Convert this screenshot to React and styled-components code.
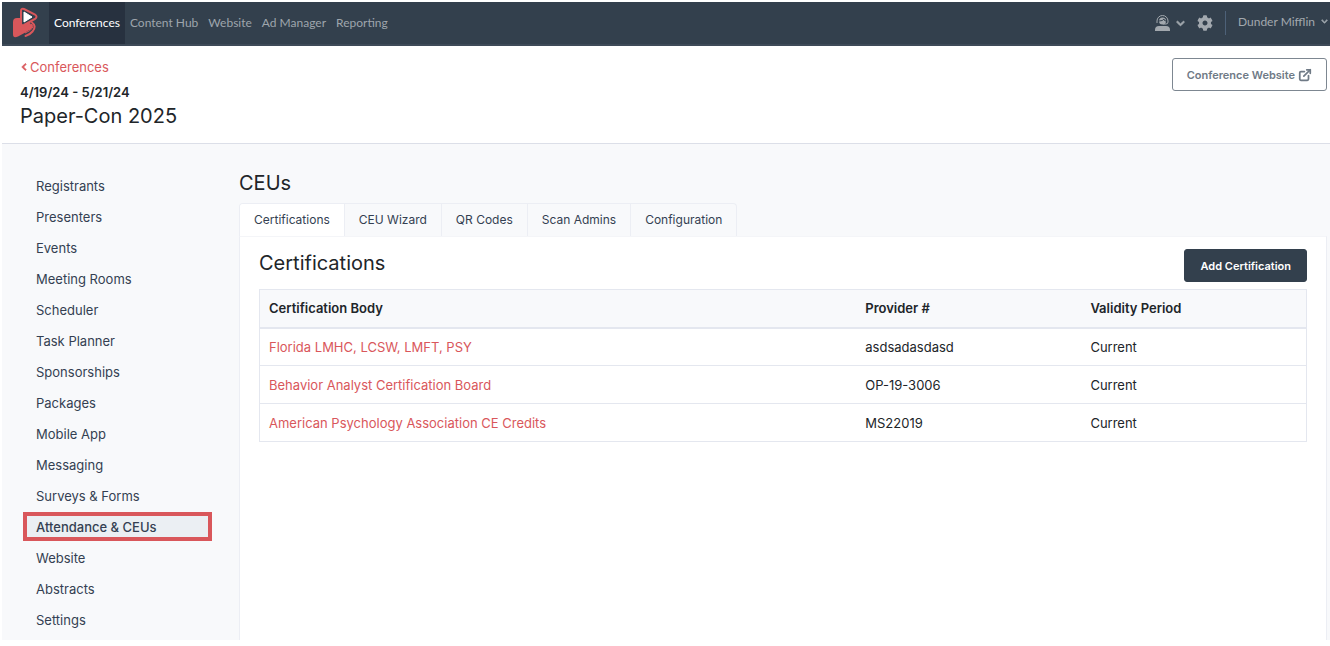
import React, { useState } from 'react';
import styled, { createGlobalStyle } from 'styled-components';
import { FaChevronLeft, FaChevronDown, FaCog } from 'react-icons/fa';
import { FiExternalLink } from 'react-icons/fi';

const GlobalStyle = createGlobalStyle`
  * {
    box-sizing: border-box;
  }

  body {
    margin: 0;
    background: #fff;
    color: #212529;
    font-family: Inter, "Open Sans", sans-serif;
    font-size: 13px;
    line-height: 20px;
  }

  h1, h2, h3, p, ul {
    margin: 0;
    padding: 0;
    font-weight: 400;
  }

  a {
    color: #d9575b;
    text-decoration: none;
  }

  button {
    font-family: inherit;
    cursor: pointer;
  }
`;

const Page = styled.div`
  display: flex;
  flex-direction: column;
  min-height: 100vh;
  padding: 2px 0 6px 2px;
`;

const TopBar = styled.header`
  display: flex;
  height: 44px;
  background: #33404d;
  border-bottom: 2px solid #3e4a58;
  font-family: Lato, sans-serif;
  font-size: 12px;
`;

const Brand = styled.a`
  display: flex;
  align-items: center;
  width: 47px;
  padding-left: 10px;
`;

const Nav = styled.nav`
  display: flex;
  flex: 1;
`;

const NavLink = styled.a`
  display: flex;
  align-items: center;
  padding: 0 5px;
  color: ${({ $active }) => ($active ? '#fff' : '#9ea5ac')};
  background: ${({ $active }) => ($active ? '#27313f' : 'transparent')};
`;

const Tools = styled.div`
  display: flex;
  align-items: center;
  gap: 12px;
`;

const ToolButton = styled.button`
  display: flex;
  align-items: center;
  gap: 6px;
  padding: 0;
  border: 0;
  background: none;
  color: #a2a8ae;
`;

const Account = styled(ToolButton)`
  height: 24px;
  padding: 0 2px 4px 12px;
  border-left: 1px solid #4d6178;
  font-size: 12px;
`;

const PageHeader = styled.div`
  display: flex;
  justify-content: space-between;
  align-items: flex-start;
  height: 98px;
  padding: 12px 3px 0 18px;
  border-bottom: 1px solid #dcdfe8;
`;

const BackLink = styled.a`
  display: flex;
  align-items: center;
  gap: 2px;
  line-height: 18px;
`;

const Dates = styled.p`
  padding-top: 6px;
  font-weight: 600;
`;

const Title = styled.h1`
  font-size: 20px;
  line-height: 28px;
`;

const OutlineLink = styled.a`
  display: flex;
  align-items: center;
  gap: 3px;
  height: 33px;
  padding: 0 14px;
  border: 1px solid #7d8791;
  border-radius: 3px;
  color: #6f7a86;
  font-size: 11px;
  font-weight: 600;
`;

const Body = styled.div`
  display: flex;
  flex: 1;
  background: #f8f9fb;
`;

const Sidebar = styled.nav`
  flex: none;
  width: 237px;
  padding: 27px 27px 4px 21px;
`;

const SideList = styled.ul`
  display: grid;
  gap: 2px;
  list-style: none;
`;

const SideLink = styled.a`
  display: flex;
  align-items: center;
  height: 29px;
  padding: 0 9px;
  border: 4px solid ${({ $active }) => ($active ? '#d9575b' : 'transparent')};
  background: ${({ $active }) => ($active ? '#ebeff3' : 'transparent')};
  color: #343f52;
  font-weight: ${({ $active }) => ($active ? 500 : 400)};
`;

const Main = styled.main`
  display: flex;
  flex: 1;
  flex-direction: column;
  padding: 25px 3px 0 0;
`;

const SectionTitle = styled.h2`
  font-size: 20px;
  line-height: 28px;
`;

const Tabs = styled.div`
  display: flex;
  align-self: flex-start;
  margin-top: 6px;
  border: 1px solid #eceef4;
  border-bottom: 0;
  border-radius: 4px 4px 0 0;
  overflow: hidden;
`;

const Tab = styled.button`
  height: 32px;
  padding: 0 14px 2px;
  border: 0;
  background: ${({ $active }) => ($active ? '#fff' : 'transparent')};
  color: #343f52;
  font-size: 12px;

  & + & {
    border-left: 1px solid #eceef4;
  }
`;

const Panel = styled.section`
  flex: 1;
  padding: 12px 19px;
  border: 1px solid #eceef4;
  border-top-color: #f4f5f8;
  border-bottom: 0;
  background: #fff;
`;

const PanelHeader = styled.div`
  display: flex;
  justify-content: space-between;
  margin-bottom: 7px;
`;

const PrimaryButton = styled.button`
  height: 33px;
  padding: 0 15px;
  border: 1px solid #33404d;
  border-radius: 3px;
  background: #33404d;
  color: #fff;
  font-size: 11px;
  font-weight: 600;
`;

const Table = styled.table`
  width: 100%;
  table-layout: fixed;
  border-collapse: collapse;
  border: 1px solid #e4e7ef;
`;

const HeadCell = styled.th`
  width: ${({ $width }) => $width};
  height: 38px;
  padding: 0 9px;
  border-bottom: 2px solid #e4e7ef;
  background: #f8f9fb;
  font-weight: 600;
  text-align: left;
`;

const Cell = styled.td`
  height: 38px;
  padding: 0 9px;
  border-bottom: 1px solid #e4e7ef;
`;

const Logo = () => (
  <svg width="26" height="32" viewBox="0 0 26 32" fill="none" aria-hidden="true">
    <path d="M8 11H5Q1 11 1 15V27Q1 32 6 29.500L18 23Q22 20 20 16L8 10Z" fill="#d9575b" />
    <path d="M18 16.500L21 15.500Q24 18 21 21.500Q19 24 15 25.500" stroke="#33404d" strokeWidth="2" />
    <path d="M18 17Q22.500 18 20 21.500Q18 24 13 26" stroke="#d9575b" strokeWidth="1" />
    <path d="M20 15.500Q25 19 20.500 24.500Q18 27.500 13.500 29" stroke="#d9575b" strokeWidth="2" strokeLinecap="round" />
    <path d="M9 4Q9 1 12 2L23 7.500Q26 9.500 23 12L12 18Q9 19 9 16Z" fill="#33404d" stroke="#d9575b" strokeWidth="2" />
    <path d="M12 5L20 10L12 15Z" fill="#fff" stroke="#fff" strokeLinejoin="round" />
  </svg>
);

const SupportIcon = () => (
  <svg width="15" height="17" viewBox="0 0 15 17" fill="none" stroke="currentColor" aria-hidden="true">
    <path d="M2 8V6A5.500 5.500 0 0 1 13 6V7Q13 9 11 9H8" />
    <circle cx="7.500" cy="6" r="3.500" fill="currentColor" stroke="none" />
    <path d="M4 6Q8 6 9 4Q9 6 11 6" stroke="#33404d" />
    <path d="M0 16V15Q0 11 4 11H11Q15 11 15 15V16Z" fill="currentColor" stroke="none" />
  </svg>
);

const navItems = ['Conferences', 'Content Hub', 'Website', 'Ad Manager', 'Reporting'];

const sideItems = [
  'Registrants',
  'Presenters',
  'Events',
  'Meeting Rooms',
  'Scheduler',
  'Task Planner',
  'Sponsorships',
  'Packages',
  'Mobile App',
  'Messaging',
  'Surveys & Forms',
  'Attendance & CEUs',
  'Website',
  'Abstracts',
  'Settings',
];

const tabs = ['Certifications', 'CEU Wizard', 'QR Codes', 'Scan Admins', 'Configuration'];

const certifications = [
  { body: 'Florida LMHC, LCSW, LMFT, PSY', provider: 'asdsadasdasd', validity: 'Current' },
  { body: 'Behavior Analyst Certification Board', provider: 'OP-19-3006', validity: 'Current' },
  { body: 'American Psychology Association CE Credits', provider: 'MS22019', validity: 'Current' },
];

function App() {
  const [tab, setTab] = useState('Certifications');

  return (
    <Page>
      <GlobalStyle />
      <TopBar>
        <Brand href="#" aria-label="Home"><Logo /></Brand>
        <Nav>
          {navItems.map((item) => (
            <NavLink key={item} href="#" $active={item === 'Conferences'}>{item}</NavLink>
          ))}
        </Nav>
        <Tools>
          <ToolButton aria-label="Support">
            <SupportIcon />
            <FaChevronDown size={9} stroke="currentColor" strokeWidth={50} />
          </ToolButton>
          <ToolButton aria-label="Settings"><FaCog size={16} /></ToolButton>
          <Account>
            Dunder Mifflin
            <FaChevronDown size={7} stroke="currentColor" strokeWidth={40} />
          </Account>
        </Tools>
      </TopBar>
      <PageHeader>
        <div>
          <BackLink href="#">
            <FaChevronLeft size={8} stroke="currentColor" strokeWidth={50} />
            Conferences
          </BackLink>
          <Dates>4/19/24 - 5/21/24</Dates>
          <Title>Paper-Con 2025</Title>
        </div>
        <OutlineLink href="#">Conference Website <FiExternalLink size={14} strokeWidth={3} /></OutlineLink>
      </PageHeader>
      <Body>
        <Sidebar>
          <SideList>
            {sideItems.map((item) => (
              <li key={item}>
                <SideLink href="#" $active={item === 'Attendance & CEUs'}>{item}</SideLink>
              </li>
            ))}
          </SideList>
        </Sidebar>
        <Main>
          <SectionTitle>CEUs</SectionTitle>
          <Tabs role="tablist">
            {tabs.map((name) => (
              <Tab key={name} role="tab" aria-selected={name === tab} $active={name === tab} onClick={() => setTab(name)}>
                {name}
              </Tab>
            ))}
          </Tabs>
          <Panel>
            <PanelHeader>
              <SectionTitle as="h3">{tab}</SectionTitle>
              <PrimaryButton>Add Certification</PrimaryButton>
            </PanelHeader>
            <Table>
              <thead>
                <tr>
                  <HeadCell $width="57%">Certification Body</HeadCell>
                  <HeadCell>Provider #</HeadCell>
                  <HeadCell>Validity Period</HeadCell>
                </tr>
              </thead>
              <tbody>
                {certifications.map((row) => (
                  <tr key={row.body}>
                    <Cell><a href="#">{row.body}</a></Cell>
                    <Cell>{row.provider}</Cell>
                    <Cell>{row.validity}</Cell>
                  </tr>
                ))}
              </tbody>
            </Table>
          </Panel>
        </Main>
      </Body>
    </Page>
  );
}

export default App;
